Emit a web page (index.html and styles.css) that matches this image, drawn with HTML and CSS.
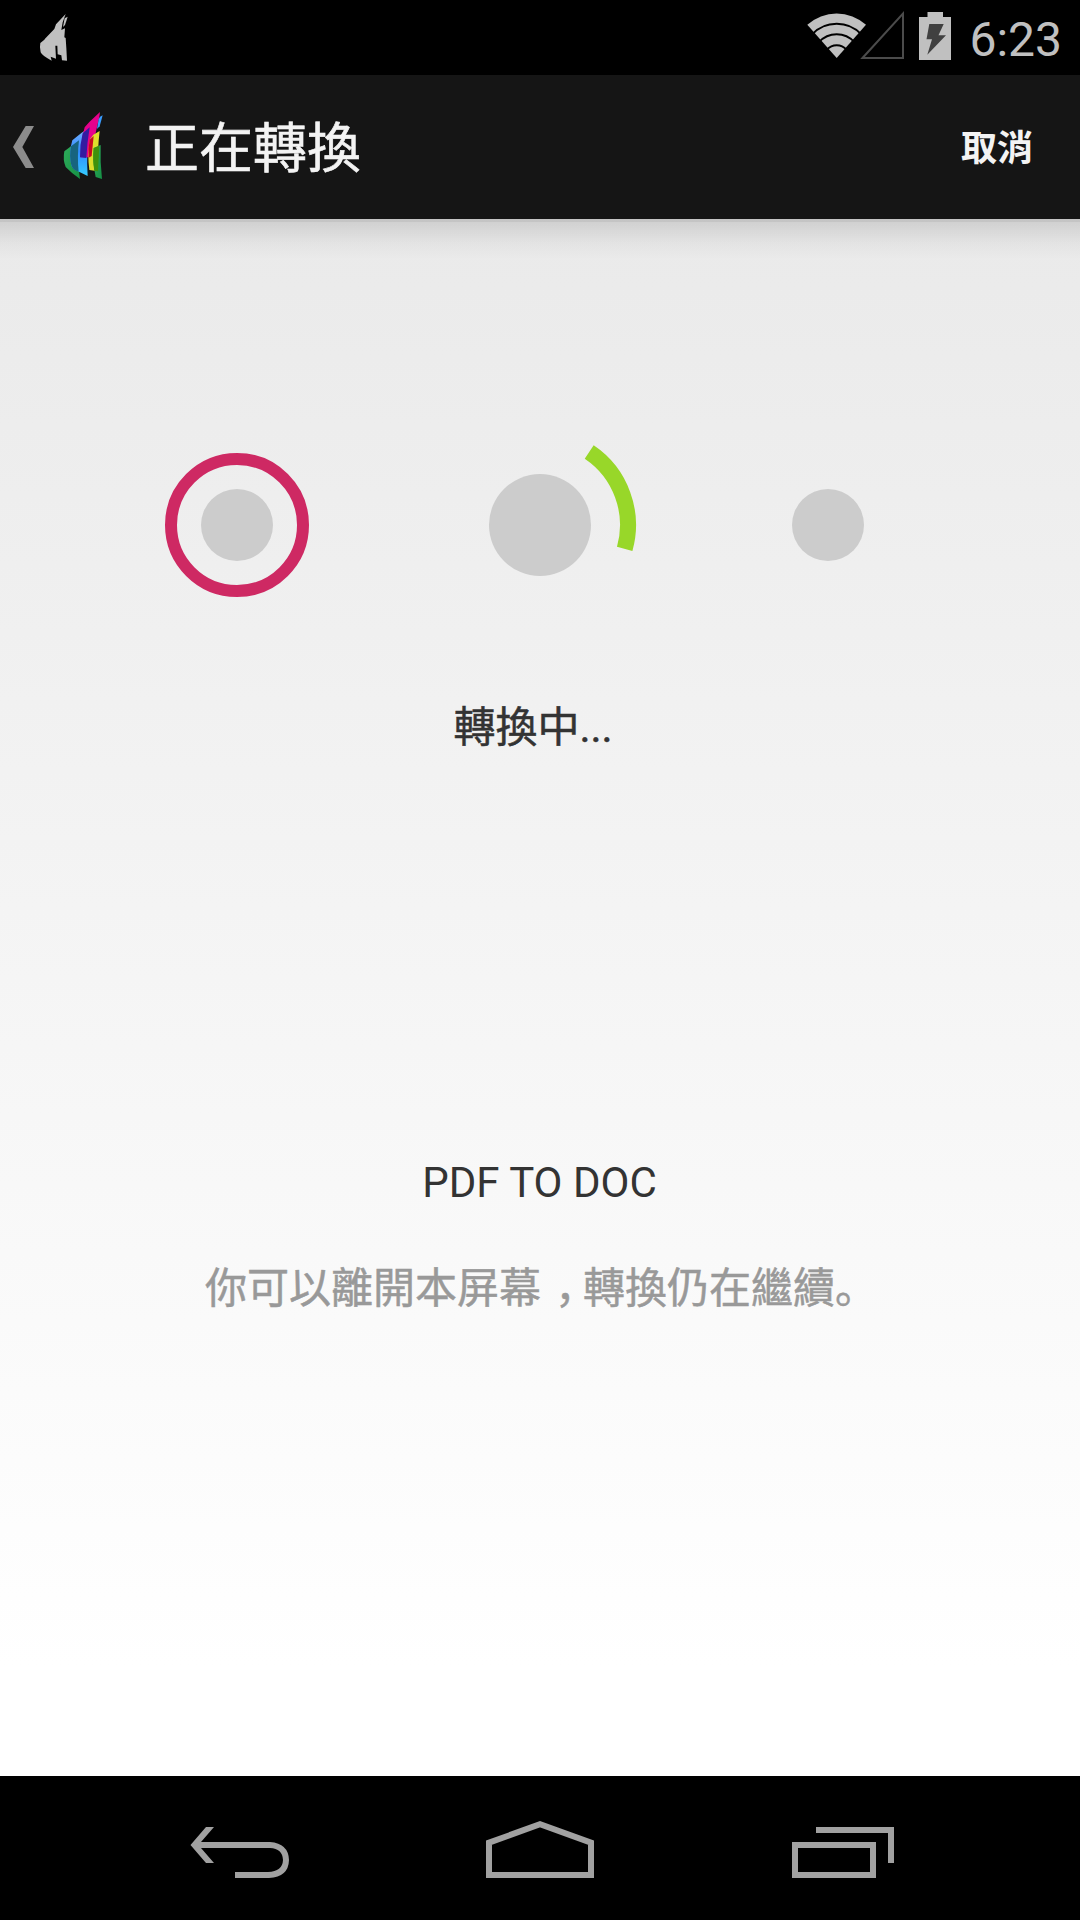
FILE: index.html
```html
<!DOCTYPE html>
<html lang="zh-Hant">
<head>
    <meta charset="UTF-8">
    <meta name="viewport" content="width=device-width, initial-scale=1.0">
    <title>正在轉換</title>
    <link rel="stylesheet" href="styles.css">
</head>
<body>
    <div class="status-bar">
        <svg class="notification" width="30" height="50" viewBox="117 40 90 150">
            <path fill="#c0c0c0" d="M197 43 L168 74 L163 88 L135 117 L133 120 L121 130 Q118 143 122 158 Q126 168 155 183 L152 171 L168 177 L166 138 L172 138 L173 164 L184 167 L186 182 L201 183 L199 145 L197 115 L193 113 L195 86 L184 91 L188 68 Z"/>
            <path fill="#c0c0c0" d="M203 51 L194 56 L189 82 L195 76 Z"/>
        </svg>
        <div class="status-icons">
            <svg width="148" height="75" viewBox="804 0 148 75">
                <path fill="#c0c0c0" d="M836.7 58 L807.3 24.7 A44 44 0 0 1 866 24.7 Z"/>
                <g fill="none" stroke="#000" stroke-width="2">
                    <path d="M812 34.5 A34 34 0 0 1 861.4 34.5"/>
                    <path d="M819 42.2 A23.7 23.7 0 0 1 854.4 42.2"/>
                    <path d="M827 49.7 A12.7 12.7 0 0 1 846.4 49.7"/>
                </g>
                <path fill="none" stroke="#4b4b4b" stroke-width="2" d="M862.5 58 L903 13.5 V58 Z"/>
                <path fill="#c0c0c0" d="M919 17 H927.5 V12 H943 V17 H951 V60 H919 Z"/>
                <path fill="#404040" d="M929.3 24 H943.7 L938.5 35.3 H946 L927.3 54.7 L932 39.3 H926.5 Z"/>
            </svg>
            <span class="clock">6:23</span>
        </div>
    </div>

    <div class="action-bar">
        <svg class="up" width="22" height="42" viewBox="38 168 66 126">
            <path fill="#8c8c8c" d="M38 231 L76 168 H101 L66 231 L101 294 H76 Z"/>
        </svg>
        <svg class="logo" width="48" height="72" viewBox="180 117 144 216">
            <defs>
                <linearGradient id="blue" x1="0" y1="0" x2="0" y2="1">
                    <stop offset="0" stop-color="#7cb4ff"/>
                    <stop offset="0.5" stop-color="#2f8cff"/>
                    <stop offset="1" stop-color="#35ccff"/>
                </linearGradient>
                <linearGradient id="green" x1="0" y1="0" x2="1" y2="1">
                    <stop offset="0" stop-color="#30ad5c"/>
                    <stop offset="1" stop-color="#159044"/>
                </linearGradient>
            </defs>
            <path fill="url(#green)" d="M237 211 L213 229 L193 244 Q188 270 197 291 Q215 310 240 327 Q231 270 237 211 Z"/>
            <path fill="url(#blue)" d="M269 172 L245 188 L217 211 Q205 250 214 286 Q218 300 237 305 L263 318 Q258 250 269 172 Z"/>
            <path fill="#17647f" d="M237 211 L213 229 Q207 260 214 286 Q219 302 236 305 Q231 260 237 211 Z"/>
            <path fill="#e6008c" d="M300 126 L268 156 L254 172 L247 200 L242 262 L272 262 L280 220 L289 180 L298 140 Z"/>
            <path fill="#dede2c" d="M299 183 L280 194 L270 208 Q261 250 268 300 L294 304 Q292 240 299 183 Z"/>
            <path fill="#331ba0" d="M269 172 L248 190 Q239 225 240 262 L259 264 Q261 220 269 172 Z"/>
            <path fill="#c80820" d="M281 198 L269 209 Q264 235 266 263 L275 258 Z"/>
            <path fill="url(#green)" d="M302 225 L281 234 Q277 275 287 321 L306 327 Q300 275 302 225 Z"/>
            <path fill="#40910b" d="M298 227 L281 234 Q277 270 283 302 L294 304 Z"/>
            <path fill="#399cff" d="M308 136 Q298 139 296 148 L291 177 L299 169 Z"/>
        </svg>
        <h1 class="title">正在轉換</h1>
        <div class="cancel">取消</div>
    </div>

    <div class="content">
        <svg class="steps" width="750" height="192" viewBox="165 429 750 192">
            <circle cx="237" cy="525" r="66" fill="none" stroke="#ce2963" stroke-width="12"/>
            <g fill="#ccc">
                <circle cx="237" cy="525" r="36"/>
                <circle cx="540" cy="525" r="51"/>
                <circle cx="828" cy="525" r="36"/>
            </g>
            <path fill="none" stroke="#98d729" stroke-width="16" d="M589.2 452 A88 88 0 0 1 624.7 548.8"/>
        </svg>
        <p class="state">轉換中...</p>
        <p class="job">PDF TO DOC</p>
        <p class="hint">你可以離開本屏幕<span class="comma" lang="ja">，</span>轉換仍在繼續<span class="stop" lang="ja">。</span></p>
    </div>

    <div class="nav-bar">
        <svg width="98" height="57" viewBox="0 0 98 57">
            <path fill="#a1a1a1" d="M0.5 24 L16 6 H24 L11 21 H80 Q98.500 22.500 99 39 Q98.500 56 79 57 H45 V51 H78 Q92.500 50.500 93 39 Q92.500 27.500 80 27 H11 L24 42 H16 Z"/>
        </svg>
        <svg width="108" height="57" viewBox="0 0 108 57">
            <path fill="none" stroke="#a1a1a1" stroke-width="6" d="M3 54 V21.700 L54 3.200 L105 21.700 V54 Z"/>
        </svg>
        <svg width="102" height="57" viewBox="0 0 102 57">
            <path fill="none" stroke="#a1a1a1" stroke-width="6" d="M3 24 H81 V54 H3 Z M24 9 H99 V42"/>
        </svg>
    </div>
</body>
</html>
```
FILE: styles.css
```css
body {
    margin: 0;
    width: 1080px;
    height: 1920px;
    display: flex;
    flex-direction: column;
    overflow: hidden;
    font-family: Roboto, "Noto Sans CJK TC", sans-serif;
}
svg {
    display: block;
    flex: none;
    overflow: visible;
}
h1, p {
    margin: 0;
}
.status-bar {
    height: 75px;
    padding: 0 18px 0 39px;
    box-sizing: border-box;
    background: #000;
    display: flex;
    align-items: center;
    justify-content: space-between;
}
.status-icons {
    display: flex;
    align-items: center;
    gap: 17px;
}
.clock {
    font-size: 48px;
    line-height: 56px;
    padding-top: 5px;
    color: #c0c0c0;
}
.action-bar {
    height: 144px;
    padding: 0 47px 0 13px;
    box-sizing: border-box;
    background: #151515;
    display: flex;
    align-items: center;
}
.logo {
    margin: 0 37px 4px 25px;
}
.title {
    flex: 1;
    padding-top: 5px;
    font-size: 54px;
    font-weight: 400;
    line-height: 80px;
    color: #f3f3f3;
    -webkit-text-stroke: 0.6px #f3f3f3;
}
.cancel {
    padding-top: 4px;
    font-size: 36px;
    font-weight: 700;
    line-height: 52px;
    color: #f3f3f3;
}
.content {
    height: 1557px;
    display: flex;
    flex-direction: column;
    align-items: center;
    background:
        linear-gradient(rgba(0, 0, 0, 0.16) 3px, rgba(0, 0, 0, 0.11) 3px, rgba(0, 0, 0, 0.03) 60%, transparent) 0 0 / 100% 40px no-repeat,
        linear-gradient(#eaeaea, #fff 93%);
    font-size: 42px;
    line-height: 60px;
}
.steps {
    margin-top: 210px;
}
.state {
    margin-top: 77px;
    padding-right: 14px;
    color: #333;
    -webkit-text-stroke: 0.5px #333;
}
.job {
    margin-top: 395px;
    padding-right: 1px;
    color: #333;
}
.hint {
    margin-top: 42px;
    padding-left: 2px;
    color: #999;
    -webkit-text-stroke: 0.5px #999;
}
.comma, .stop {
    font-family: "Noto Sans CJK JP", sans-serif;
}
.comma {
    padding: 0 7px 0 14px;
    font-feature-settings: "halt";
}
.nav-bar {
    height: 144px;
    padding: 45px 186px 0 190px;
    box-sizing: border-box;
    background: #000;
    display: flex;
    justify-content: space-between;
}
```
